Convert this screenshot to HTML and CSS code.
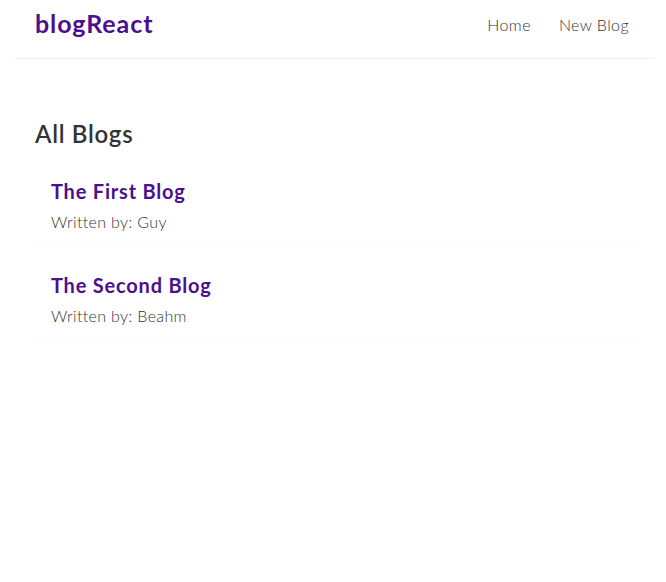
FILE: index.html
```html
<!DOCTYPE html>
<html lang="en">
<head>
<meta charset="utf-8">
<title>blogReact</title>
<link rel="stylesheet" href="styles.css">
</head>
<body>
<div class="app">
  <nav class="navbar">
    <h1 class="brand">blogReact</h1>
    <div class="links">
      <a class="link" href="#">Home</a>
      <a class="link" href="#">New Blog</a>
    </div>
  </nav>
  <main class="content">
    <h2 class="page-title">All Blogs</h2>
    <div class="blog-preview">
      <h2 class="blog-title">The First Blog</h2>
      <p class="blog-author">Written by: Guy</p>
    </div>
    <div class="blog-preview">
      <h2 class="blog-title">The Second Blog</h2>
      <p class="blog-author">Written by: Beahm</p>
    </div>
  </main>
</div>
</body>
</html>
```

FILE: styles.css
```css
* {
  margin: 0;
  font-family: "Lato", "Open Sans", sans-serif;
  color: #333;
}
html, body {
  background: #fff;
}
body {
  padding-left: 4px;
}
.navbar {
  box-sizing: border-box;
  height: 59px;
  padding: 9px 20px 0;
  display: flex;
  align-items: flex-start;
  max-width: 640px;
  margin: 0 auto;
  border-bottom: 1px solid #f2f2f2;
}
.brand {
  font-size: 25px;
  line-height: 28px;
  font-weight: 700;
  letter-spacing: 0.9px;
  color: #4b0f8f;
}
.links {
  margin-left: auto;
  display: flex;
  padding-top: 0;
}
.link {
  margin-left: 16px;
  padding: 6px;
  font-size: 16px;
  line-height: 20px;
  font-weight: 300;
  letter-spacing: 0.4px;
  text-decoration: none;
  color: #333;
}
.content {
  max-width: 600px;
  margin: 40px auto;
  padding: 20px;
}
.page-title {
  font-size: 24px;
  line-height: 30px;
  font-weight: 600;
  letter-spacing: 0.7px;
}
.blog-preview {
  padding: 10px 16px;
  margin: 20px 0;
  border-bottom: 1px solid #fafafa;
}
.blog-title {
  font-size: 20px;
  line-height: 25px;
  font-weight: 700;
  letter-spacing: 0.8px;
  color: #4b0f8f;
  margin-bottom: 8px;
}
.blog-author {
  font-size: 16px;
  line-height: 20px;
  font-weight: 300;
  letter-spacing: 0.35px;
}
```
